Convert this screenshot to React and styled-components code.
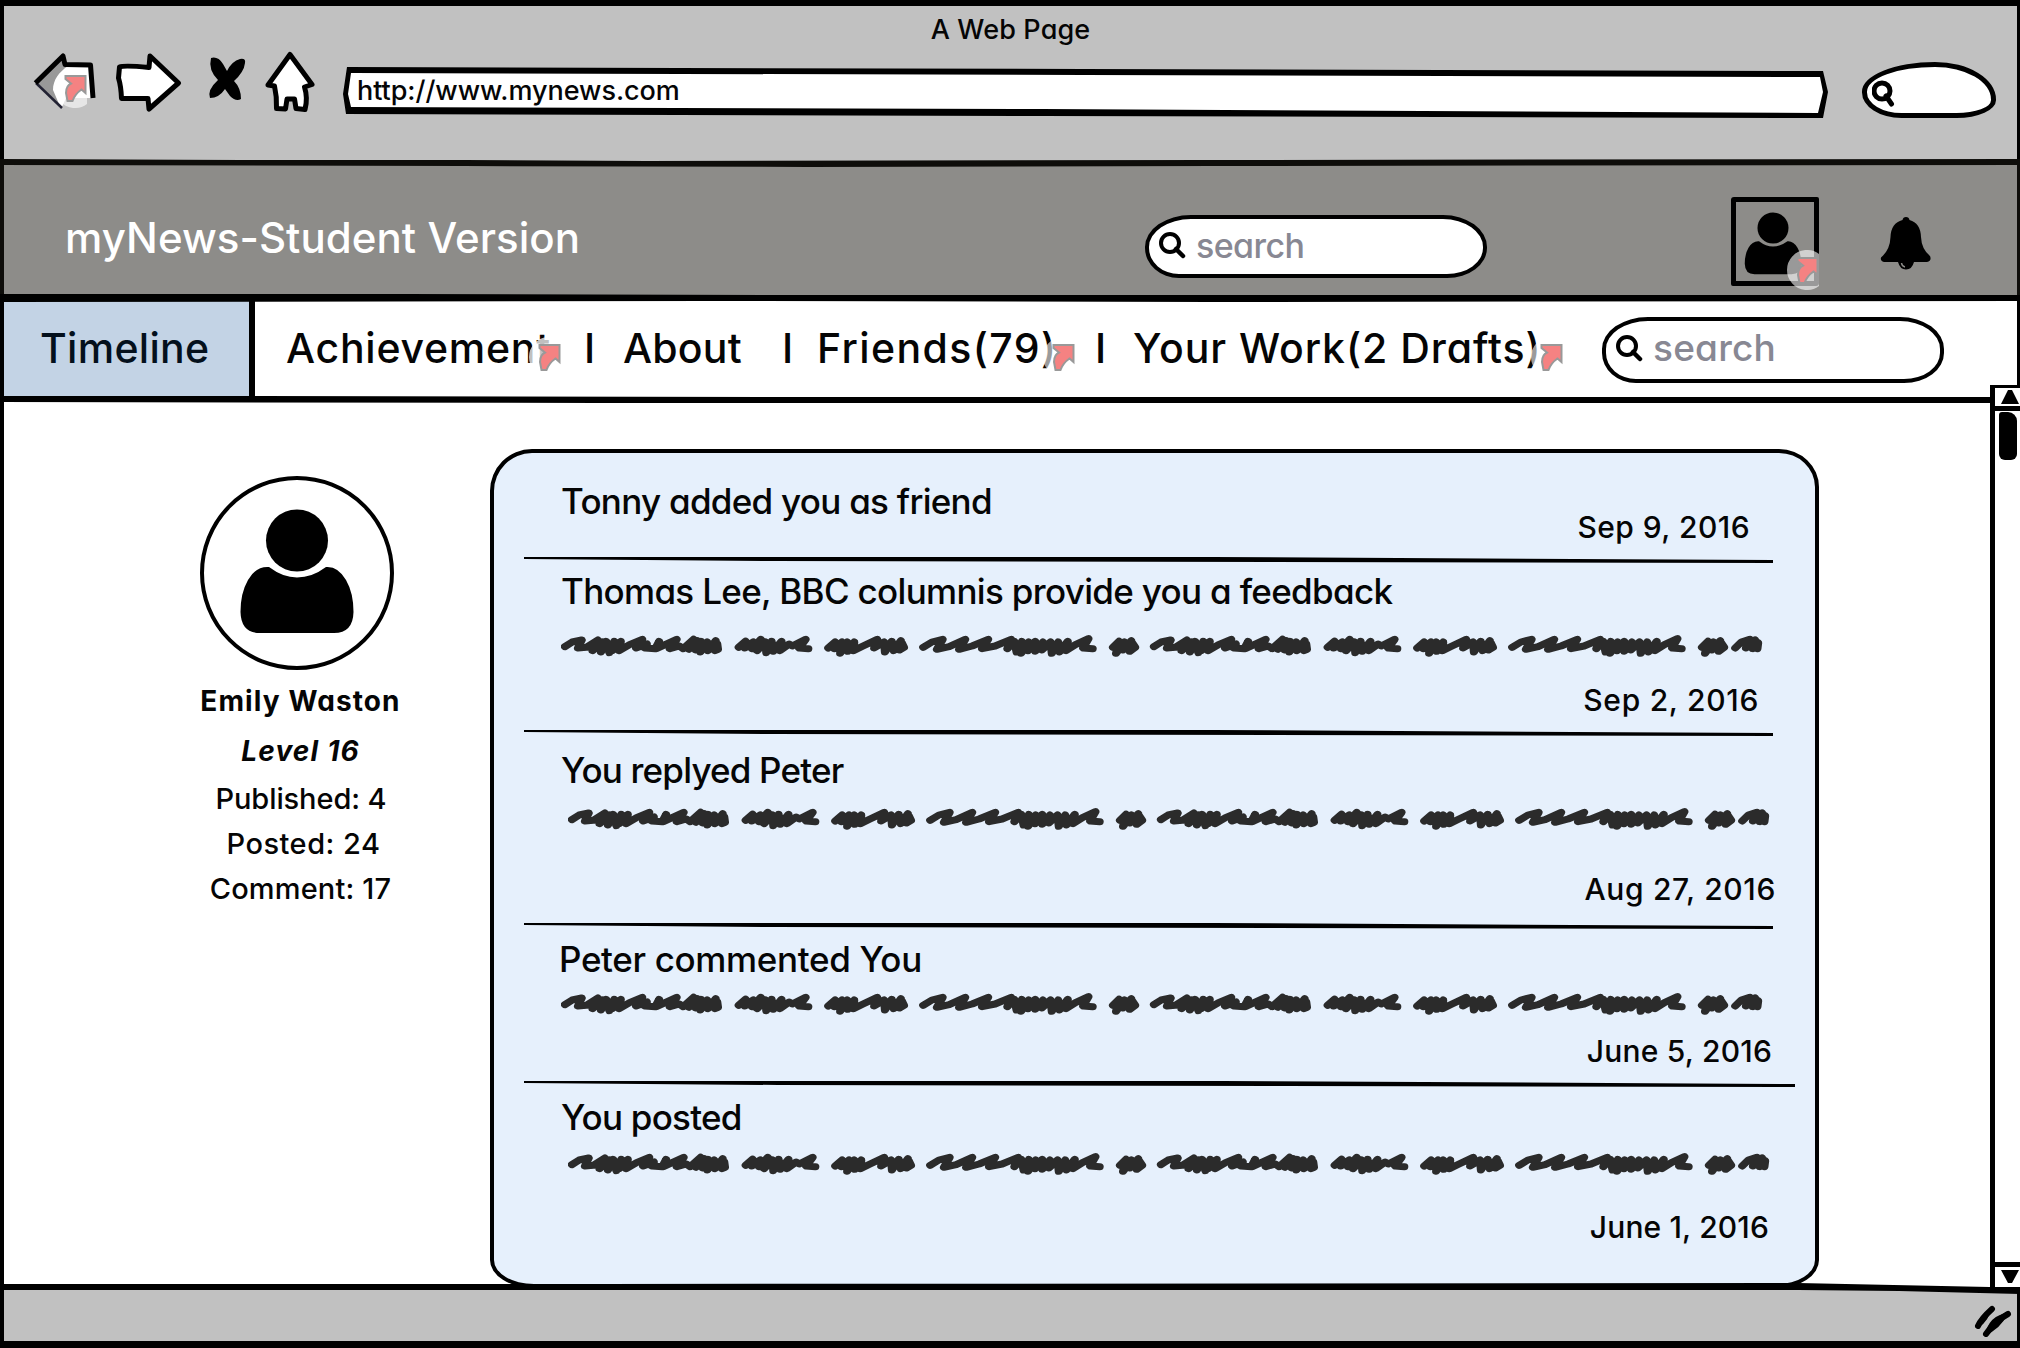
import React from "react";
import styled, { createGlobalStyle } from "styled-components";

const INK = "#000";
const CHROME = "#c1c1c1";

const GlobalStyle = createGlobalStyle`
  body {
    margin: 0;
    background: #fff;
    overflow: hidden;
  }
  * {
    box-sizing: border-box;
  }
  svg {
    display: block;
    flex: none;
  }
`;

const Window = styled.div`
  width: 2020px;
  height: 1348px;
  display: flex;
  flex-direction: column;
  background: #fff;
  border-top: 6px solid ${INK};
  color: #050505;
  font-family: Inter, "Open Sans", "Liberation Sans", sans-serif;
  font-weight: 500;
  font-feature-settings: "cv11";
  white-space: pre;
`;

const Rule = styled.div`
  flex: none;
  position: relative;
  z-index: 1;
  width: ${(p) => p.$width || "100%"};
  height: ${(p) => p.$height || 10}px;
  margin: ${(p) => p.$margin || "-5px 0"};
  background: ${(p) => p.$color || INK};
  clip-path: polygon(${(p) => p.$shape});
`;

/* Browser chrome */

const Chrome = styled.header`
  height: 157px;
  flex: none;
  display: flex;
  flex-direction: column;
  padding-top: 8px;
  background: ${CHROME};
  border-left: 4px solid ${INK};
  border-right: 3px solid ${INK};
`;

const PageTitle = styled.div`
  text-align: center;
  font-size: 27px;
  line-height: 32px;
  letter-spacing: 0.15px;
`;

const Toolbar = styled.div`
  display: flex;
  align-items: flex-start;
  margin-top: 4px;
  padding-left: 26px;
`;

const ToolButton = styled.div`
  position: relative;
  width: ${(p) => p.$width}px;
  height: 70px;
  margin-right: ${(p) => p.$gap}px;
`;

const UrlBar = styled.div`
  position: relative;
  width: 1486px;
  height: 52px;
  margin-top: 16px;
  padding-left: 15px;
  background: ${INK};
  clip-path: polygon(5px 1px, 740px 3px, 1481px 5px, 1486px 26px, 1481px 52px, 700px 50px, 4px 48px, 1px 28px);

  &::before {
    content: "";
    position: absolute;
    inset: 0;
    background: #fff;
    clip-path: polygon(9px 7px, 740px 9px, 1478px 11px, 1481px 26px, 1476px 47px, 700px 43px, 9px 41px, 6px 28px);
  }
`;

const UrlText = styled.span`
  position: relative;
  display: block;
  font-size: 27px;
  line-height: 49px;
  letter-spacing: -0.05px;
`;

const ChromeSearch = styled.div`
  width: 134px;
  height: 56px;
  margin: 12px 0 0 34px;
  padding: 13px 0 0 5px;
  background: #fff;
  border: 5px solid ${INK};
  border-radius: 74px 62px 40px 40px / 30px 38px 18px 26px;
`;

/* Site header */

const SiteHeader = styled.div`
  height: 135px;
  flex: none;
  display: flex;
  align-items: flex-start;
  padding-top: 3px;
  background: #8d8c89;
  border-left: 4px solid #0e0d0a;
  border-right: 3px solid #0e0d0a;
`;

const Brand = styled.h1`
  width: 518px;
  margin: 47px 0 0 61px;
  font-size: 42px;
  font-weight: 500;
  line-height: 50px;
  letter-spacing: 0.05px;
  color: #fff;
`;

const SearchBox = styled.div`
  width: 342px;
  height: ${(p) => p.$height}px;
  margin: ${(p) => p.$margin};
  padding: 0 0 ${(p) => p.$lift}px 9px;
  display: flex;
  align-items: center;
  gap: 10px;
  background: #fff;
  border: 4.5px solid ${INK};
  border-radius: 46px 44px 40px 34px / 32px 32px 30px 30px;
  color: #888893;
  font-size: ${(p) => p.$size}px;
  letter-spacing: ${(p) => p.$spacing}px;
`;

const AvatarButton = styled.div`
  position: relative;
  width: 88px;
  height: 89px;
  margin: 31px 0 0 244px;
  border: 5px solid ${INK};
  border-radius: 3px 2px 3px 2px;
`;

const BellButton = styled.div`
  margin: 49px 0 0 61px;
`;

const BadgeSpot = styled.div`
  position: absolute;
  left: ${(p) => p.$x}px;
  top: ${(p) => p.$y}px;
`;

/* Navigation */

const Nav = styled.nav`
  height: 102px;
  flex: none;
  display: grid;
  grid-template-columns: 251px 31px 298px 39px 159px 35px 278px 38px 469px 342px;
  border-left: 4px solid ${INK};
  border-right: 3px solid ${INK};
  font-size: 41px;
  line-height: 100px;
`;

const ActiveTab = styled.div`
  padding-left: 36px;
  background: #c3d3e5;
  border-right: 6px solid ${INK};
  letter-spacing: 0.3px;
  color: #04101c;
`;

const NavItem = styled.div`
  position: relative;
  letter-spacing: ${(p) => p.$spacing || 0}px;
`;

/* Content */

const Content = styled.main`
  height: 888px;
  flex: none;
  display: flex;
  align-items: flex-start;
  padding-top: 3px;
  border-left: 4px solid ${INK};
`;

const Profile = styled.aside`
  width: 223px;
  margin: 73px 82px 0 181px;
  display: flex;
  flex-direction: column;
  align-items: center;
`;

const ProfilePicture = styled.div`
  width: 194px;
  height: 194px;
  border: 4px solid ${INK};
  border-radius: 50%;
`;

const ProfileLine = styled.div`
  margin-top: ${(p) => p.$top}px;
  padding-left: ${(p) => p.$shift || 8}px;
  font-size: ${(p) => p.$size || 29}px;
  font-weight: ${(p) => (p.$bold ? 700 : 500)};
  font-style: ${(p) => (p.$italic ? "italic" : "normal")};
  letter-spacing: ${(p) => p.$spacing}px;
  line-height: 40px;
`;

const Card = styled.section`
  width: 1329px;
  height: 839px;
  margin-top: 46px;
  background: #e6f0fc;
  border: 4px solid ${INK};
  border-radius: 42px 40px 42px 44px / 42px 38px 28px 28px;
`;

const Entry = styled.article`
  height: ${(p) => p.$height}px;
  display: flex;
  flex-direction: column;
`;

const EntryTitle = styled.div`
  margin: ${(p) => p.$top}px 0 0 ${(p) => p.$left}px;
  font-size: 35px;
  line-height: 44px;
  letter-spacing: ${(p) => p.$spacing}px;
`;

const EntryBody = styled.div`
  margin: ${(p) => p.$top}px 0 0 ${(p) => p.$left}px;
`;

const EntryDate = styled.time`
  margin: ${(p) => p.$top}px ${(p) => p.$right}px 0 0;
  align-self: flex-end;
  font-size: 30px;
  line-height: 36px;
  letter-spacing: ${(p) => p.$spacing}px;
`;

const Divider = styled.div`
  width: ${(p) => p.$width}px;
  height: 9px;
  margin-left: 30px;
  background: ${INK};
  clip-path: polygon(0 1px, 30% 1px, 55% 1px, 100% 4px, 100% 7px, 60% 6px, 20% 5px, 0 3px);
`;

const Scrollbar = styled.div`
  position: relative;
  z-index: 2;
  width: 30px;
  height: 902px;
  margin: -18px 0 0 auto;
  display: flex;
  flex-direction: column;
  background: #fff;
  border-left: 5px solid ${INK};
`;

const ScrollArrow = styled.div`
  height: ${(p) => (p.$down ? 25 : 26)}px;
  flex: none;
  padding: ${(p) => (p.$down ? 1 : 0)}px 0 0 6px;
  border-top: ${(p) => (p.$down ? 5 : 3)}px solid ${INK};
  border-bottom: ${(p) => (p.$down ? 0 : 5)}px solid ${INK};
`;

const Thumb = styled.div`
  width: 18px;
  height: 48px;
  margin: 1px 0 auto 4px;
  background: ${INK};
  border-radius: 3px 9px 6px 6px;
`;

const StatusBar = styled.footer`
  flex: 1;
  display: flex;
  justify-content: flex-end;
  padding: 17px 4px 0 0;
  background: ${CHROME};
  border: solid ${INK};
  border-width: 0 3px 7px 4px;
`;

/* Drawings */

const LinkBadge = ({ x, y, halo = 0.6 }) => (
  <BadgeSpot $x={x} $y={y}>
    <svg width="40" height="40" viewBox="0 0 40 40">
      <path d="M32 4A20 20 0 1 0 32 36Z" fill="#fff" opacity={halo} />
      <path
        d="M10.500 8H30.500V25L26.500 21.500Q20 26 17.500 33H12.500L11 25Q11 18 16 15.500L10.500 11Z"
        fill="#f58282"
        stroke="#999"
        strokeWidth="2"
      />
    </svg>
  </BadgeSpot>
);

const BackIcon = () => (
  <svg width="70" height="70" viewBox="31 50 70 70">
    <path d="M37 83L63.500 56L66 64L91 65L93 98L67 98L63 107Z" fill="#fff" />
    <path d="M37 83L63.500 56L69 66C60 72 54 80 54 90L60 104Z" fill="#999" />
    <path d="M37 83L63 108" stroke="#223" strokeWidth="2.500" fill="none" />
    <path d="M36.500 83L64 56L66 64.500L91.500 65L94 98" stroke="#000" strokeWidth="5" fill="none" strokeLinejoin="round" />
  </svg>
);

const ForwardIcon = () => (
  <svg width="70" height="70" viewBox="112 50 70 70">
    <path
      d="M119.500 67Q124 65 149 67.500L150 56L178.500 83L149 109L148 98.500L121.500 98.500Q121 86 118.500 78Z"
      fill="#fff"
      stroke="#000"
      strokeWidth="5"
      strokeLinejoin="round"
    />
  </svg>
);

const StopIcon = () => (
  <svg width="45" height="70" viewBox="205 50 45 70">
    <path
      d="M211 58Q218 56 223 64L227 71Q232 61 240 59Q246 58 245 63Q244 72 234 81Q241 88 241 99Q236 102 230 96L225 89Q219 98 210 98Q207 90 218 80Q208 70 211 58Z"
      fill="#000"
    />
  </svg>
);

const HomeIcon = () => (
  <svg width="56" height="70" viewBox="262 50 56 70">
    <path
      d="M290 54.500L312 84.500L304.500 87Q308 98 305 109.500L296 108.500L294.500 99H287L285.500 109L276.500 108.500Q277 97 274.500 86L268 85Z"
      fill="#fff"
      stroke="#000"
      strokeWidth="5"
      strokeLinejoin="round"
    />
  </svg>
);

const Magnifier = ({ bold }) => (
  <svg width="28" height="28" viewBox="0 0 28 28">
    <circle cx={bold ? 10 : 12} cy={bold ? 11 : 12} r={bold ? 8 : 9} fill="none" stroke="#000" strokeWidth={bold ? 5 : 4} />
    <path d={bold ? "M14 16L19.500 24" : "M18 18L25 25"} stroke="#000" strokeWidth={bold ? 5 : 4.5} strokeLinecap="round" />
  </svg>
);

const Person = ({ width, height, viewBox }) => (
  <svg width={width} height={height} viewBox={viewBox}>
    <circle cx="97" cy="64.500" r="31" />
    <path d="M69 91Q83 101.500 97 101.500Q112 101.500 126 91Q138 90 146 104Q153.500 117 153.500 136Q153 157 134 157H60Q41 157 40.500 136Q40.500 117 48 104Q56 90 69 91Z" />
  </svg>
);

const Bell = () => (
  <svg width="52" height="56" viewBox="0 0 52 56">
    <path d="M26 2Q29 2 29.500 5Q40.500 8 41 22Q41.500 34 50 41Q52 46 47 47H34Q32 54.500 26 54.500Q20 54.500 18 47H4Q0 46 1 42.500Q10 35 10.500 22Q11 8 22.500 5Q23 2 26 2Z" />
    <path d="M21.500 48Q22 51.500 25 52" stroke="#8d8c89" strokeWidth="1.500" fill="none" />
  </svg>
);

const WORDS = [
  "M26 68L45 54L70 48L60 72L82 70L112 48L98 80L125 54L120 84L134 52L142 86L155 52L150 80L172 52L168 80L195 62L228 46L212 72L240 60L235 72L262 74L272 52L265 74L318 46L300 74L325 66L335 74L362 46L350 76L372 50L368 78L382 52L380 84L398 54L400 80L420 50L418 80L426 76L424 60",
  "M480 70L498 52L496 72L518 54L515 74L538 46L528 80L550 54L552 86L566 52L570 82L592 52L588 80L612 60L620 66L655 46L638 72L662 74",
  "M714 72L732 54L730 74L750 54L745 88L764 54L765 82L782 54L780 80L805 66L842 46L834 72L860 54L862 84L880 52L885 80L904 50L900 78L912 70L906 56",
  "M962 70L985 54L1013 46L998 76L1030 68L1072 46L1056 76L1090 66L1132 46L1116 74L1150 66L1192 46L1182 74L1200 52L1206 84L1220 52L1218 88L1238 54L1236 80L1255 52L1255 82L1275 54L1272 78L1295 54L1298 88L1315 54L1318 84L1340 52L1335 80L1360 62L1394 44L1380 72L1405 74",
  "M1458 70L1474 52L1466 88L1488 54L1484 78L1506 50L1502 82L1516 70L1508 56",
];
const TAIL = "M3084 72L3100 54L3122 46L3112 72L3136 48L3130 74L3144 56L3142 74";

const Scribble = () => (
  <svg width="1206" height="24" viewBox="0 -2 1206 24">
    <g
      transform="translate(-6 -12) scale(0.3827 0.3333)"
      fill="none"
      stroke="#2b2b2b"
      strokeWidth="21"
      strokeLinecap="round"
      strokeLinejoin="round"
    >
      {[0, 1539].map((offset) => (
        <g key={offset} transform={`translate(${offset} 0)`}>
          {WORDS.map((d) => (
            <path key={d} d={d} />
          ))}
        </g>
      ))}
      <path d={TAIL} />
    </g>
  </svg>
);

const Triangle = ({ down }) => (
  <svg width="18" height="18" viewBox="0 0 18 18">
    <path d={down ? "M0 2H18L11 15H7Z" : "M7 2H11L18 16H0Z"} />
  </svg>
);

const ResizeGrip = () => (
  <svg width="40" height="32" viewBox="0 0 40 32">
    <path
      d="M5 21Q8 14 19 4M13 29Q22 16 35 9"
      fill="none"
      stroke="#000"
      strokeWidth="6"
      strokeLinecap="round"
    />
    <path d="M6 22Q3 13 18 3Q16 16 6 22ZM12 30Q16 10 35 8Q27 25 12 30Z" />
  </svg>
);

const ENTRIES = [
  { title: "Tonny added you as friend", spacing: -0.72, left: 67, top: 26, date: "Sep 9, 2016", dateTop: -14, right: 65, dateSpacing: 0.45, height: 103, line: 1249 },
  { title: "Thomas Lee, BBC columnis provide you a feedback", spacing: -0.68, left: 67, top: 4, body: [21, 67], date: "Sep 2, 2016", dateTop: 24, right: 56, dateSpacing: 0.7, height: 164, line: 1249 },
  { title: "You replyed Peter", spacing: -0.82, left: 67, top: 10, body: [15, 74], date: "Aug 27, 2016", dateTop: 40, right: 39, dateSpacing: 0.65, height: 184, line: 1249 },
  { title: "Peter commented You", spacing: -0.35, left: 65, top: 6, body: [11, 67], date: "June 5, 2016", dateTop: 17, right: 43, dateSpacing: 0.2, height: 149, line: 1271 },
  { title: "You posted", spacing: -0.75, left: 67, top: 6, body: [13, 74], date: "June 1, 2016", dateTop: 33, right: 46, dateSpacing: 0.15, height: 190 },
];

export default function App() {
  return (
    <Window>
      <GlobalStyle />
      <Chrome>
        <PageTitle>A Web Page</PageTitle>
        <Toolbar>
          <ToolButton $width={70} $gap={12}>
            <BackIcon />
            <LinkBadge x={25} y={18} />
          </ToolButton>
          <ToolButton $width={70} $gap={23}>
            <ForwardIcon />
          </ToolButton>
          <ToolButton $width={45} $gap={12}>
            <StopIcon />
          </ToolButton>
          <ToolButton $width={56} $gap={24}>
            <HomeIcon />
          </ToolButton>
          <UrlBar>
            <UrlText>http://www.mynews.com</UrlText>
          </UrlBar>
          <ChromeSearch>
            <Magnifier bold />
          </ChromeSearch>
        </Toolbar>
      </Chrome>
      <Rule
        $color="#0e0d0a"
        $shape="0 1px, 12% 2px, 23% 2px, 32% 3px, 60% 2px, 100% 1px, 100% 7px, 60% 8px, 40% 9px, 23% 8px, 0 7px"
      />
      <SiteHeader>
        <Brand>myNews-Student Version</Brand>
        <SearchBox $height={63} $margin="49px 0 0 562px" $lift={3} $size={34} $spacing={-0.6}>
          <Magnifier />
          search
        </SearchBox>
        <AvatarButton>
          <Person width={78} height={79} viewBox="23 12.5 156 158" />
          <LinkBadge x={51} y={48} />
        </AvatarButton>
        <BellButton>
          <Bell />
        </BellButton>
      </SiteHeader>
      <Rule $shape="0 1px, 20% 1px, 40% 2px, 100% 2px, 100% 8px, 60% 9px, 35% 8px, 0 9px" />
      <Nav>
        <ActiveTab>Timeline</ActiveTab>
        <span />
        <NavItem $spacing={0.75}>
          Achievement
          <LinkBadge x={243} y={39} halo={0.75} />
        </NavItem>
        <NavItem>I</NavItem>
        <NavItem $spacing={0.2}>About</NavItem>
        <NavItem>I</NavItem>
        <NavItem $spacing={1.4}>
          Friends(79)
          <LinkBadge x={226} y={39} />
        </NavItem>
        <NavItem>I</NavItem>
        <NavItem $spacing={0.95}>
          Your Work(2 Drafts)
          <LinkBadge x={398} y={39} />
        </NavItem>
        <SearchBox $height={66} $margin="19px 0 0" $lift={5} $size={37} $spacing={0.2}>
          <Magnifier />
          search
        </SearchBox>
      </Nav>
      <Rule $width="1992px" $shape="0 1px, 13% 1px, 40% 2px, 100% 2px, 100% 8px, 30% 8px, 0 7px" />
      <Content>
        <Profile>
          <ProfilePicture>
            <Person width={186} height={186} viewBox="4 4 186 186" />
          </ProfilePicture>
          <ProfileLine $top={11} $size={28} $bold $spacing={1.1}>Emily Waston</ProfileLine>
          <ProfileLine $top={10} $size={28} $bold $italic $spacing={1.2}>Level 16</ProfileLine>
          <ProfileLine $top={8} $spacing={-0.1} $shift={9}>Published: 4</ProfileLine>
          <ProfileLine $top={5} $spacing={0.5} $shift={14}>Posted: 24</ProfileLine>
          <ProfileLine $top={5} $spacing={0.15}>Comment: 17</ProfileLine>
        </Profile>
        <Card>
          {ENTRIES.map((e) => (
            <React.Fragment key={e.title}>
              <Entry $height={e.height}>
                <EntryTitle $top={e.top} $left={e.left} $spacing={e.spacing}>{e.title}</EntryTitle>
                {e.body && (
                  <EntryBody $top={e.body[0]} $left={e.body[1]}>
                    <Scribble />
                  </EntryBody>
                )}
                <EntryDate $top={e.dateTop} $right={e.right} $spacing={e.dateSpacing}>{e.date}</EntryDate>
              </Entry>
              {e.line && <Divider $width={e.line} />}
            </React.Fragment>
          ))}
        </Card>
        <Scrollbar>
          <ScrollArrow>
            <Triangle />
          </ScrollArrow>
          <Thumb />
          <ScrollArrow $down>
            <Triangle down />
          </ScrollArrow>
        </Scrollbar>
      </Content>
      <Rule
        $height={12}
        $margin="-6px 0"
        $shape="0 2px, 30% 2px, 89% 1px, 98.5% 5px, 100% 5px, 100% 12px, 94% 9px, 89% 8px, 30% 8px, 0 8px"
      />
      <StatusBar>
        <ResizeGrip />
      </StatusBar>
    </Window>
  );
}
